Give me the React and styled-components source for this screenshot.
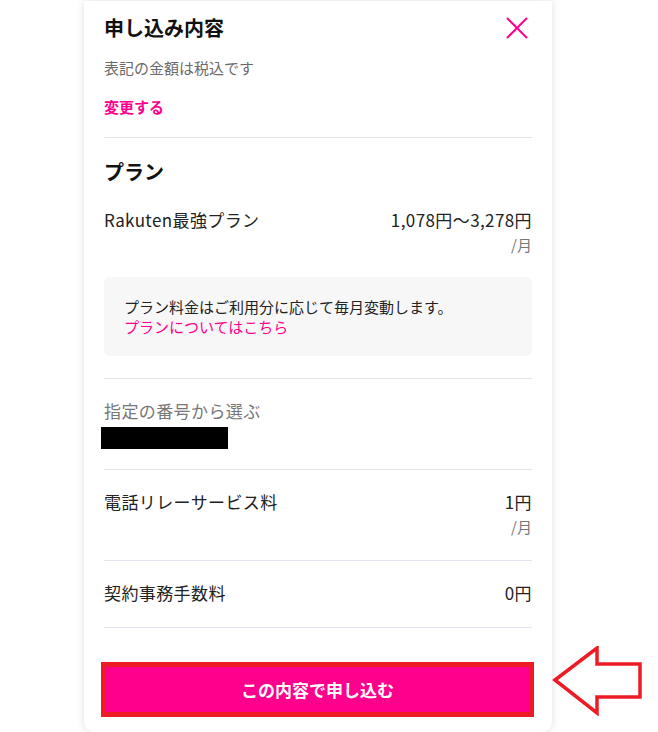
import React from "react";
import styled, { createGlobalStyle } from "styled-components";

const GlobalStyle = createGlobalStyle`
  html, body {
    margin: 0;
    padding: 0;
    background: #ffffff;
    font-family: "Noto Sans CJK JP", "Noto Sans", sans-serif;
  }
`;

const rows = [
  { label: "電話リレーサービス料", price: "1円", unit: "/月", gap: "23px" },
  { label: "契約事務手数料", price: "0円", gap: "22px" },
];

export default function App() {
  return (
    <>
      <GlobalStyle />
      <Page>
        <Card>
          <Body>
            <Header>
              <Title>申し込み内容</Title>
              <CloseButton aria-label="閉じる">
                <svg width="22" height="22" viewBox="0 0 22 22">
                  <path d="M1 1L21 21M21 1L1 21" stroke="#ff008c" strokeWidth="2" />
                </svg>
              </CloseButton>
            </Header>
            <Note>表記の金額は税込です</Note>
            <ChangeLink>変更する</ChangeLink>
            <Divider marginTop="20px" />

            <Section>
              <SectionTitle>プラン</SectionTitle>
              <PriceRow marginTop="22px">
                <Label>Rakuten最強プラン</Label>
                <Price>1,078円〜3,278円</Price>
              </PriceRow>
              <Unit>/月</Unit>
              <InfoBox>
                <InfoText>プラン料金はご利用分に応じて毎月変動します。</InfoText>
                <InfoLink>プランについてはこちら</InfoLink>
              </InfoBox>
            </Section>
            <Divider marginTop="22px" />

            <Section>
              <MutedLabel>指定の番号から選ぶ</MutedLabel>
              <Redacted />
            </Section>
            <Divider marginTop="20px" />

            {rows.map((row) => (
              <React.Fragment key={row.label}>
                <Section>
                  <PriceRow>
                    <Label>{row.label}</Label>
                    <Price>{row.price}</Price>
                  </PriceRow>
                  {row.unit && <Unit>{row.unit}</Unit>}
                </Section>
                <Divider marginTop={row.gap} />
              </React.Fragment>
            ))}
          </Body>
          <Footer>
            <SubmitButton>この内容で申し込む</SubmitButton>
          </Footer>
        </Card>
        <Pointer>
          <svg width="92" height="70" viewBox="0 0 92 70">
            <path
              d="M3 34L45 2V18H88V51H45V67Z"
              fill="#ffffff"
              stroke="#ed1c24"
              strokeWidth="3.5"
              strokeLinejoin="miter"
            />
          </svg>
        </Pointer>
      </Page>
    </>
  );
}

const Page = styled.div`
  display: flex;
  align-items: flex-end;
  height: 732px;
  overflow: hidden;
`;

const Card = styled.div`
  width: 468px;
  height: 731px;
  margin-left: 84px;
  background: #ffffff;
  border-radius: 0 0 10px 10px;
  box-shadow: 0 0 8px rgba(0, 0, 0, 0.13);
  display: flex;
  flex-direction: column;
`;

const Body = styled.div`
  padding: 13px 20px 0 20px;
  flex: 1;
`;

const Header = styled.div`
  display: flex;
  justify-content: space-between;
  align-items: center;
  height: 28px;
`;

const Title = styled.h1`
  margin: 0;
  font-size: 20px;
  font-weight: 700;
  color: #111;
  line-height: 28px;
`;

const CloseButton = styled.button`
  display: flex;
  align-items: center;
  justify-content: center;
  border: none;
  background: none;
  padding: 0;
  margin-right: 4px;
  cursor: pointer;
`;

const Note = styled.div`
  margin-top: 15px;
  font-size: 15px;
  line-height: 21px;
  color: #6b6b6b;
`;

const ChangeLink = styled.a`
  display: block;
  margin-top: 18px;
  font-size: 15px;
  line-height: 21px;
  font-weight: 700;
  color: #ff008c;
  cursor: pointer;
`;

const Divider = styled.hr`
  margin: ${(props) => props.marginTop || "20px"} 0 0 0;
  border: none;
  border-top: 1px solid #e4e4ee;
`;

const Section = styled.div`
  padding-top: 20px;
`;

const SectionTitle = styled.h2`
  margin: 0;
  font-size: 20px;
  font-weight: 700;
  color: #111;
  line-height: 28px;
`;

const PriceRow = styled.div`
  display: flex;
  justify-content: space-between;
  align-items: center;
  margin-top: ${(props) => props.marginTop || "0px"};
  font-size: 17px;
  letter-spacing: 0.4px;
  line-height: 24px;
  color: #222;
`;

const Label = styled.span``;

const Price = styled.span``;

const Unit = styled.div`
  margin-top: 2px;
  text-align: right;
  font-size: 15px;
  line-height: 21px;
  color: #777;
`;

const InfoBox = styled.div`
  margin-top: 22px;
  padding: 20px 20px 19px 20px;
  background: #f7f7f7;
  border-radius: 6px;
  font-size: 15px;
  line-height: 20px;
`;

const InfoText = styled.div`
  color: #222;
`;

const InfoLink = styled.a`
  display: block;
  color: #ff008c;
  cursor: pointer;
`;

const MutedLabel = styled.div`
  font-size: 17px;
  letter-spacing: 0.4px;
  line-height: 24px;
  color: #777;
`;

const Redacted = styled.div`
  width: 127px;
  height: 22px;
  margin: 4px 0 0 -3px;
  background: #000;
`;

const Footer = styled.div`
  padding: 0 18px 15px 17px;
`;

const SubmitButton = styled.button`
  width: 100%;
  height: 55px;
  border: 5px solid #ed1c24;
  background: #ff008c;
  color: #ffffff;
  font-family: "Noto Sans CJK JP", "Noto Sans", sans-serif;
  font-size: 17px;
  font-weight: 700;
  cursor: pointer;
`;

const Pointer = styled.div`
  margin: 0 0 16px 0;
  line-height: 0;
`;
